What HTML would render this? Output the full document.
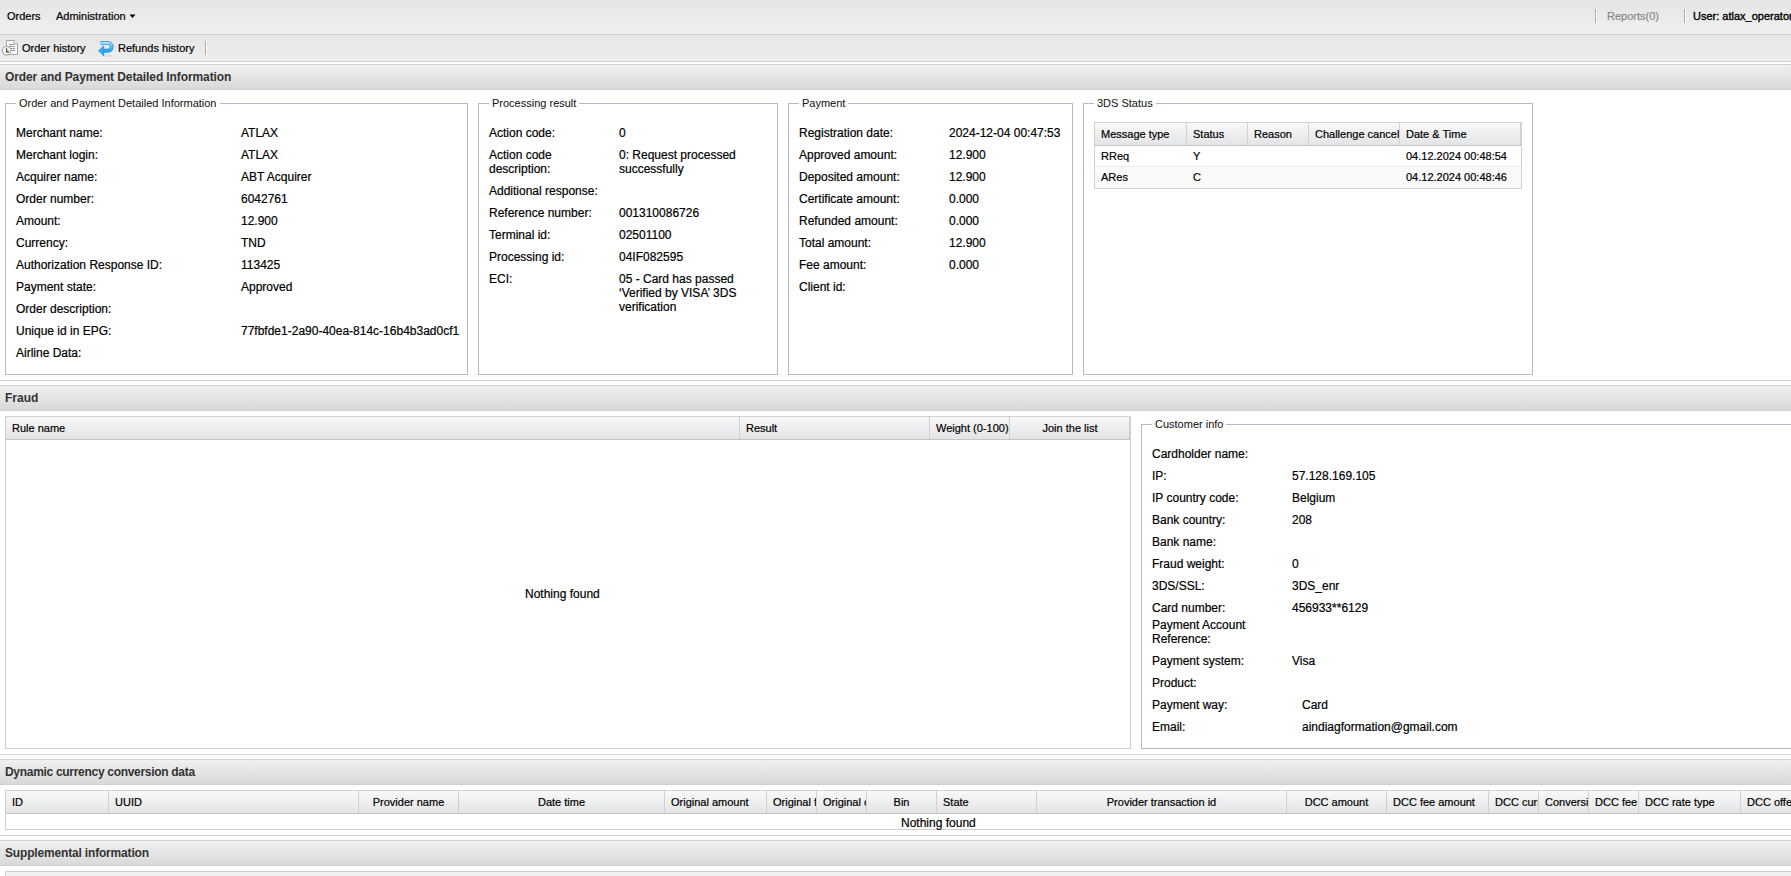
<!DOCTYPE html><html><head><meta charset="utf-8"><style>
*{box-sizing:border-box}
html,body{margin:0;padding:0}
body{width:1791px;height:876px;overflow:hidden;position:relative;background:#fff;font-family:"Liberation Sans",sans-serif;font-size:12px;color:#000}
.t{position:absolute;white-space:nowrap;line-height:14px;-webkit-text-stroke:0.2px currentColor}
.b{position:absolute}
.s11{font-size:11px}
.lg{font-size:11px;color:#151515;background:#fff;padding:0 3px;-webkit-text-stroke:0.05px currentColor}
.hd{font-weight:bold;color:#333;-webkit-text-stroke:0}
.gh{position:absolute;white-space:nowrap;overflow:hidden;font-size:11px;line-height:14px;padding:0 6px 0 7px;color:#000;-webkit-text-stroke:0.2px currentColor}
.c{text-align:center}
</style></head><body><div class="b" style="left:0px;top:0px;width:1791px;height:34px;background:linear-gradient(#e5e5e5,#f0f0f0)"></div>
<div class="b" style="left:0px;top:34px;width:1791px;height:1px;background:#d0d0d0"></div>
<div class="t s11" style="left:7px;top:9px;">Orders</div>
<div class="t s11" style="left:56px;top:9px;">Administration</div>
<svg class="b" style="left:129px;top:14px" width="7" height="5"><path d="M0.5 0.5H6.5L3.5 4Z" fill="#000"/></svg>
<div class="b" style="left:1595px;top:9px;width:1px;height:14px;background:#b3ab98"></div>
<div class="b" style="left:1596px;top:9px;width:1px;height:14px;background:#fff"></div>
<div class="t s11" style="left:1607px;top:9px;color:#888">Reports(0)</div>
<div class="b" style="left:1684px;top:9px;width:1px;height:14px;background:#b3ab98"></div>
<div class="b" style="left:1685px;top:9px;width:1px;height:14px;background:#fff"></div>
<div class="t s11" style="left:1693px;top:9px;-webkit-text-stroke:0.35px #000">User: atlax_operator</div>
<div class="b" style="left:0px;top:35px;width:1791px;height:26px;background:linear-gradient(#e6e6e6,#eeeeee)"></div>
<div class="b" style="left:0px;top:61px;width:1791px;height:1px;background:#d0d0d0"></div>
<div class="b" style="left:0px;top:64px;width:1791px;height:1px;background:#d0d0d0"></div>
<svg class="b" style="left:0;top:38px" width="20" height="20" viewBox="0 0 20 20">
<path d="M6.5 2.5H14L17.5 6V16.5H6.5Z" fill="#fbfbfb" stroke="#a4a4a4"/>
<path d="M14 2.5V6H17.5" fill="#fff" stroke="#a4a4a4"/>
<path d="M9 6.5H14.5M9 8.5H15M9 10.5H15M9 12.5H15" stroke="#9a9a9a"/>
<circle cx="6.6" cy="12.8" r="4.3" fill="#f3f3ec" stroke="#a8a8a8" stroke-width="1.1"/>
<path d="M6.6 10.2V13.9H9" fill="none" stroke="#3a3a3a" stroke-width="1.1"/>
</svg>
<svg class="b" style="left:96px;top:38px" width="20" height="20" viewBox="0 0 20 20">
<defs><linearGradient id="rg" x1="0" y1="0" x2="0" y2="1"><stop offset="0" stop-color="#9be2fd"/><stop offset="1" stop-color="#19a9f2"/></linearGradient></defs>
<ellipse cx="10.5" cy="17.8" rx="6" ry="1" fill="#000" opacity="0.07"/>
<path d="M4.4 4.9H11.8A3.95 3.95 0 0 1 11.8 12.8H7.4" fill="none" stroke="#3790db" stroke-width="3.9"/>
<path d="M4.4 4.9H11.8A3.95 3.95 0 0 1 11.8 12.8H7.4" fill="none" stroke="url(#rg)" stroke-width="2.1"/>
<path d="M2.6 12.8L7.7 8.1V17.5Z" fill="#2fb6f6" stroke="#3790db" stroke-width="1" stroke-linejoin="round"/>
</svg>
<div class="t s11" style="left:22px;top:41px;">Order history</div>
<div class="t s11" style="left:118px;top:41px;">Refunds history</div>
<div class="b" style="left:205px;top:41px;width:1px;height:14px;background:#b3ab98"></div>
<div class="b" style="left:206px;top:41px;width:1px;height:14px;background:#fff"></div>
<div class="b" style="left:0px;top:64px;width:1791px;height:1px;background:#d0d0d0"></div>
<div class="b" style="left:0px;top:65px;width:1791px;height:24px;background:linear-gradient(#f0f0f0,#d9d9d9)"></div>
<div class="b" style="left:0px;top:89px;width:1791px;height:1px;background:#d0d0d0"></div>
<div class="t hd" style="left:5px;top:70px;letter-spacing:-0.1px">Order and Payment Detailed Information</div>
<div class="b" style="left:5px;top:103px;width:463px;height:272px;border:1px solid #b5b8c8"></div>
<div class="t lg" style="left:16px;top:96px">Order and Payment Detailed Information</div>
<div class="t " style="left:16px;top:126px;">Merchant name:</div>
<div class="t " style="left:241px;top:126px;">ATLAX</div>
<div class="t " style="left:16px;top:148px;">Merchant login:</div>
<div class="t " style="left:241px;top:148px;">ATLAX</div>
<div class="t " style="left:16px;top:170px;">Acquirer name:</div>
<div class="t " style="left:241px;top:170px;">ABT Acquirer</div>
<div class="t " style="left:16px;top:192px;">Order number:</div>
<div class="t " style="left:241px;top:192px;">6042761</div>
<div class="t " style="left:16px;top:214px;">Amount:</div>
<div class="t " style="left:241px;top:214px;">12.900</div>
<div class="t " style="left:16px;top:236px;">Currency:</div>
<div class="t " style="left:241px;top:236px;">TND</div>
<div class="t " style="left:16px;top:258px;">Authorization Response ID:</div>
<div class="t " style="left:241px;top:258px;">113425</div>
<div class="t " style="left:16px;top:280px;">Payment state:</div>
<div class="t " style="left:241px;top:280px;">Approved</div>
<div class="t " style="left:16px;top:302px;">Order description:</div>
<div class="t " style="left:16px;top:324px;">Unique id in EPG:</div>
<div class="t " style="left:241px;top:324px;">77fbfde1-2a90-40ea-814c-16b4b3ad0cf1</div>
<div class="t " style="left:16px;top:346px;">Airline Data:</div>
<div class="b" style="left:478px;top:103px;width:300px;height:272px;border:1px solid #b5b8c8"></div>
<div class="t lg" style="left:489px;top:96px">Processing result</div>
<div class="t " style="left:489px;top:126px;">Action code:</div>
<div class="t " style="left:619px;top:126px;">0</div>
<div class="t " style="left:489px;top:148px;">Action code</div>
<div class="t " style="left:489px;top:162px;">description:</div>
<div class="t " style="left:619px;top:148px;">0: Request processed</div>
<div class="t " style="left:619px;top:162px;">successfully</div>
<div class="t " style="left:489px;top:184px;">Additional response:</div>
<div class="t " style="left:489px;top:206px;">Reference number:</div>
<div class="t " style="left:619px;top:206px;">001310086726</div>
<div class="t " style="left:489px;top:228px;">Terminal id:</div>
<div class="t " style="left:619px;top:228px;">02501100</div>
<div class="t " style="left:489px;top:250px;">Processing id:</div>
<div class="t " style="left:619px;top:250px;">04IF082595</div>
<div class="t " style="left:489px;top:272px;">ECI:</div>
<div class="t " style="left:619px;top:272px;">05 - Card has passed</div>
<div class="t " style="left:619px;top:286px;">‘Verified by VISA’ 3DS</div>
<div class="t " style="left:619px;top:300px;">verification</div>
<div class="b" style="left:788px;top:103px;width:285px;height:272px;border:1px solid #b5b8c8"></div>
<div class="t lg" style="left:799px;top:96px">Payment</div>
<div class="t " style="left:799px;top:126px;">Registration date:</div>
<div class="t " style="left:949px;top:126px;">2024-12-04 00:47:53</div>
<div class="t " style="left:799px;top:148px;">Approved amount:</div>
<div class="t " style="left:949px;top:148px;">12.900</div>
<div class="t " style="left:799px;top:170px;">Deposited amount:</div>
<div class="t " style="left:949px;top:170px;">12.900</div>
<div class="t " style="left:799px;top:192px;">Certificate amount:</div>
<div class="t " style="left:949px;top:192px;">0.000</div>
<div class="t " style="left:799px;top:214px;">Refunded amount:</div>
<div class="t " style="left:949px;top:214px;">0.000</div>
<div class="t " style="left:799px;top:236px;">Total amount:</div>
<div class="t " style="left:949px;top:236px;">12.900</div>
<div class="t " style="left:799px;top:258px;">Fee amount:</div>
<div class="t " style="left:949px;top:258px;">0.000</div>
<div class="t " style="left:799px;top:280px;">Client id:</div>
<div class="b" style="left:1083px;top:103px;width:450px;height:272px;border:1px solid #b5b8c8"></div>
<div class="t lg" style="left:1094px;top:96px">3DS Status</div>
<div class="b" style="left:1094px;top:122px;width:428px;height:67px;border:1px solid #d0d0d0"></div>
<div class="b" style="left:1095px;top:167px;width:426px;height:21px;background:#fafafa"></div>
<div class="b" style="left:1095px;top:123px;width:426px;height:23px;background:linear-gradient(#f9f9f9,#e3e4e6);border-bottom:1px solid #c5c5c5"></div>
<div class="gh" style="left:1094px;top:123px;width:92px;height:22px;padding-top:4px">Message type</div>
<div class="b" style="left:1186px;top:123px;width:1px;height:22px;background:#d0d0d0"></div>
<div class="gh" style="left:1186px;top:123px;width:61px;height:22px;padding-top:4px">Status</div>
<div class="b" style="left:1247px;top:123px;width:1px;height:22px;background:#d0d0d0"></div>
<div class="gh" style="left:1247px;top:123px;width:61px;height:22px;padding-top:4px">Reason</div>
<div class="b" style="left:1308px;top:123px;width:1px;height:22px;background:#d0d0d0"></div>
<div class="gh" style="left:1308px;top:123px;width:91px;height:22px;padding-top:4px">Challenge cancel</div>
<div class="b" style="left:1399px;top:123px;width:1px;height:22px;background:#d0d0d0"></div>
<div class="gh" style="left:1399px;top:123px;width:122px;height:22px;padding-top:4px">Date &amp; Time</div>
<div class="b" style="left:1520px;top:123px;width:1px;height:22px;background:#d0d0d0"></div>
<div class="b" style="left:1095px;top:166px;width:426px;height:1px;background:#ededed"></div>
<div class="t s11" style="left:1101px;top:149px;">RReq</div>
<div class="t s11" style="left:1193px;top:149px;">Y</div>
<div class="t s11" style="left:1406px;top:149px;">04.12.2024 00:48:54</div>
<div class="t s11" style="left:1101px;top:170px;">ARes</div>
<div class="t s11" style="left:1193px;top:170px;">C</div>
<div class="t s11" style="left:1406px;top:170px;">04.12.2024 00:48:46</div>
<div class="b" style="left:0px;top:380px;width:1791px;height:1px;background:#d0d0d0"></div>
<div class="b" style="left:0px;top:385px;width:1791px;height:1px;background:#d0d0d0"></div>
<div class="b" style="left:0px;top:386px;width:1791px;height:24px;background:linear-gradient(#f0f0f0,#d9d9d9)"></div>
<div class="b" style="left:0px;top:410px;width:1791px;height:1px;background:#d0d0d0"></div>
<div class="t hd" style="left:5px;top:391px;letter-spacing:0px">Fraud</div>
<div class="b" style="left:5px;top:416px;width:1126px;height:333px;border:1px solid #d0d0d0"></div>
<div class="b" style="left:6px;top:417px;width:1124px;height:23px;background:linear-gradient(#f9f9f9,#e3e4e6);border-bottom:1px solid #c5c5c5"></div>
<div class="gh" style="left:5px;top:417px;width:734px;height:22px;padding-top:4px">Rule name</div>
<div class="b" style="left:739px;top:417px;width:1px;height:22px;background:#d0d0d0"></div>
<div class="gh" style="left:739px;top:417px;width:190px;height:22px;padding-top:4px">Result</div>
<div class="b" style="left:929px;top:417px;width:1px;height:22px;background:#d0d0d0"></div>
<div class="gh" style="left:929px;top:417px;width:80px;height:22px;padding-top:4px">Weight (0-100)</div>
<div class="b" style="left:1009px;top:417px;width:1px;height:22px;background:#d0d0d0"></div>
<div class="gh c" style="left:1009px;top:417px;width:121px;height:22px;padding-top:4px">Join the list</div>
<div class="b" style="left:1129px;top:417px;width:1px;height:22px;background:#d0d0d0"></div>
<div class="t " style="left:525px;top:587px;">Nothing found</div>
<div class="b" style="left:1141px;top:424px;width:700px;height:325px;border:1px solid #b5b8c8"></div>
<div class="t lg" style="left:1152px;top:417px">Customer info</div>
<div class="t " style="left:1152px;top:447px;">Cardholder name:</div>
<div class="t " style="left:1152px;top:469px;">IP:</div>
<div class="t " style="left:1292px;top:469px;">57.128.169.105</div>
<div class="t " style="left:1152px;top:491px;">IP country code:</div>
<div class="t " style="left:1292px;top:491px;">Belgium</div>
<div class="t " style="left:1152px;top:513px;">Bank country:</div>
<div class="t " style="left:1292px;top:513px;">208</div>
<div class="t " style="left:1152px;top:535px;">Bank name:</div>
<div class="t " style="left:1152px;top:557px;">Fraud weight:</div>
<div class="t " style="left:1292px;top:557px;">0</div>
<div class="t " style="left:1152px;top:579px;">3DS/SSL:</div>
<div class="t " style="left:1292px;top:579px;">3DS_enr</div>
<div class="t " style="left:1152px;top:601px;">Card number:</div>
<div class="t " style="left:1292px;top:601px;">456933**6129</div>
<div class="t " style="left:1152px;top:618px;">Payment Account</div>
<div class="t " style="left:1152px;top:632px;">Reference:</div>
<div class="t " style="left:1152px;top:654px;">Payment system:</div>
<div class="t " style="left:1292px;top:654px;">Visa</div>
<div class="t " style="left:1152px;top:676px;">Product:</div>
<div class="t " style="left:1152px;top:698px;">Payment way:</div>
<div class="t " style="left:1302px;top:698px;">Card</div>
<div class="t " style="left:1152px;top:720px;">Email:</div>
<div class="t " style="left:1302px;top:720px;">aindiagformation@gmail.com</div>
<div class="b" style="left:0px;top:754px;width:1791px;height:1px;background:#d0d0d0"></div>
<div class="b" style="left:0px;top:759px;width:1791px;height:1px;background:#d0d0d0"></div>
<div class="b" style="left:0px;top:760px;width:1791px;height:24px;background:linear-gradient(#f0f0f0,#d9d9d9)"></div>
<div class="b" style="left:0px;top:784px;width:1791px;height:1px;background:#d0d0d0"></div>
<div class="t hd" style="left:5px;top:765px;letter-spacing:-0.3px">Dynamic currency conversion data</div>
<div class="b" style="left:5px;top:790px;width:1800px;height:40px;border:1px solid #d0d0d0"></div>
<div class="b" style="left:6px;top:791px;width:1894px;height:23px;background:linear-gradient(#f9f9f9,#e3e4e6);border-bottom:1px solid #c5c5c5"></div>
<div class="gh" style="left:5px;top:791px;width:103px;height:22px;padding-top:4px">ID</div>
<div class="b" style="left:108px;top:791px;width:1px;height:22px;background:#d0d0d0"></div>
<div class="gh" style="left:108px;top:791px;width:250px;height:22px;padding-top:4px">UUID</div>
<div class="b" style="left:358px;top:791px;width:1px;height:22px;background:#d0d0d0"></div>
<div class="gh c" style="left:358px;top:791px;width:100px;height:22px;padding-top:4px">Provider name</div>
<div class="b" style="left:458px;top:791px;width:1px;height:22px;background:#d0d0d0"></div>
<div class="gh c" style="left:458px;top:791px;width:206px;height:22px;padding-top:4px">Date time</div>
<div class="b" style="left:664px;top:791px;width:1px;height:22px;background:#d0d0d0"></div>
<div class="gh" style="left:664px;top:791px;width:102px;height:22px;padding-top:4px">Original amount</div>
<div class="b" style="left:766px;top:791px;width:1px;height:22px;background:#d0d0d0"></div>
<div class="gh" style="left:766px;top:791px;width:50px;height:22px;padding-top:4px">Original f</div>
<div class="b" style="left:816px;top:791px;width:1px;height:22px;background:#d0d0d0"></div>
<div class="gh" style="left:816px;top:791px;width:50px;height:22px;padding-top:4px">Original c</div>
<div class="b" style="left:866px;top:791px;width:1px;height:22px;background:#d0d0d0"></div>
<div class="gh c" style="left:866px;top:791px;width:70px;height:22px;padding-top:4px">Bin</div>
<div class="b" style="left:936px;top:791px;width:1px;height:22px;background:#d0d0d0"></div>
<div class="gh" style="left:936px;top:791px;width:100px;height:22px;padding-top:4px">State</div>
<div class="b" style="left:1036px;top:791px;width:1px;height:22px;background:#d0d0d0"></div>
<div class="gh c" style="left:1036px;top:791px;width:250px;height:22px;padding-top:4px">Provider transaction id</div>
<div class="b" style="left:1286px;top:791px;width:1px;height:22px;background:#d0d0d0"></div>
<div class="gh c" style="left:1286px;top:791px;width:100px;height:22px;padding-top:4px">DCC amount</div>
<div class="b" style="left:1386px;top:791px;width:1px;height:22px;background:#d0d0d0"></div>
<div class="gh" style="left:1386px;top:791px;width:102px;height:22px;padding-top:4px">DCC fee amount</div>
<div class="b" style="left:1488px;top:791px;width:1px;height:22px;background:#d0d0d0"></div>
<div class="gh" style="left:1488px;top:791px;width:50px;height:22px;padding-top:4px">DCC curr</div>
<div class="b" style="left:1538px;top:791px;width:1px;height:22px;background:#d0d0d0"></div>
<div class="gh" style="left:1538px;top:791px;width:50px;height:22px;padding-top:4px">Conversi</div>
<div class="b" style="left:1588px;top:791px;width:1px;height:22px;background:#d0d0d0"></div>
<div class="gh" style="left:1588px;top:791px;width:50px;height:22px;padding-top:4px">DCC fee</div>
<div class="b" style="left:1638px;top:791px;width:1px;height:22px;background:#d0d0d0"></div>
<div class="gh" style="left:1638px;top:791px;width:102px;height:22px;padding-top:4px">DCC rate type</div>
<div class="b" style="left:1740px;top:791px;width:1px;height:22px;background:#d0d0d0"></div>
<div class="gh" style="left:1740px;top:791px;width:160px;height:22px;padding-top:4px">DCC offer</div>
<div class="b" style="left:1899px;top:791px;width:1px;height:22px;background:#d0d0d0"></div>
<div class="t " style="left:901px;top:816px;">Nothing found</div>
<div class="b" style="left:0px;top:835px;width:1791px;height:1px;background:#d0d0d0"></div>
<div class="b" style="left:0px;top:840px;width:1791px;height:1px;background:#d0d0d0"></div>
<div class="b" style="left:0px;top:841px;width:1791px;height:24px;background:linear-gradient(#f0f0f0,#d9d9d9)"></div>
<div class="b" style="left:0px;top:865px;width:1791px;height:1px;background:#d0d0d0"></div>
<div class="t hd" style="left:5px;top:846px;letter-spacing:-0.17px">Supplemental information</div>
<div class="b" style="left:5px;top:871px;width:1800px;height:10px;border:1px solid #d0d0d0;background:linear-gradient(#f4f4f4,#ececec)"></div></body></html>
